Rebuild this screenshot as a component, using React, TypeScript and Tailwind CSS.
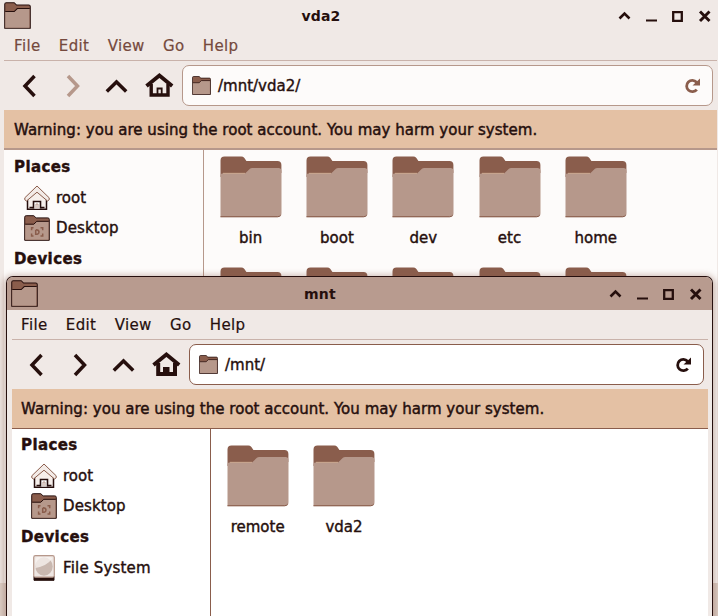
import React from "react";

const DARK = "#260f0d";
const BROWN = "#8a5d4c";
const MID = "#b6988b";

function SmallFolder({ size, desktop = false }: { size: number; desktop?: boolean }) {
  return (
    <svg width={size} height={size} viewBox="0 0 26 26" className="shrink-0">
      <path d="M.7 25.3V2.2Q.7.7 2.2.7h7.6l2.3 2.2h11.7q1.5 0 1.5 1.5v20.9z" fill={BROWN} stroke={DARK} strokeWidth="1" />
      <path d="M1.2 9.4h8.6l3-2.9h11.7v18.3H1.2z" fill={MID} />
      <path d="M1.2 9.2h8.6l3-2.9h12" fill="none" stroke={DARK} strokeWidth="1" />
      {desktop && (
        <g fill="none" stroke={BROWN} strokeWidth="1.5">
          <path d="M9.500 12.800H7.600v2.400M16.500 12.800h2.200v2.400M9.500 21H7.600v-2.400M16.500 21h2.200v-2.400" />
          <path d="M11.700 14.800v4.500h1.500q1.800-.3 1.800-2.300t-3-2.200" />
        </g>
      )}
    </svg>
  );
}

function BigFolder() {
  return (
    <svg width="62" height="62" viewBox="0 0 62 62" className="shrink-0">
      <path d="M.5 21V4.500q0-4 4-4h16.700q2 0 3.200 1.400l2 3h31q4 0 4 4V17z" fill={BROWN} />
      <path d="M.5 61.200V19.600q.2-2.400 2.800-2.400h22l4.600-4.400q1-.8 2.200-.8h26.300q3 0 3.100 3.200v42q0 4-4 4z" fill={MID} />
      <path d="M3 17.300h22" stroke="#e4c1a4" strokeWidth=".6" />
      <path d="M.5 60.700h57q2.200 0 3.200-1.600" fill="none" stroke={BROWN} strokeWidth="1" />
    </svg>
  );
}

function SidebarHome() {
  return (
    <svg width="26" height="26" viewBox="0 0 26 26" className="shrink-0">
      <path d="M3.500 13v11.300h19V13L13 5z" fill="#f6efeb" stroke={DARK} strokeWidth="1.500" />
      <path d="M.8 12.800 13 1 25.200 12.800v2l-1.700 1.200L13 7.200 2.500 16 .8 14.800z" fill="#f3ebe7" stroke={BROWN} strokeWidth="1" />
      <path d="M9.500 23.500v-7h7v7" fill="#fff" stroke={DARK} strokeWidth="1.600" />
      <path d="M5.500 22.500h4M16.500 22.500h4" stroke={DARK} strokeWidth="1.600" />
      <path d="M12 23v-4h2v4" fill="none" stroke={MID} />
    </svg>
  );
}

function Drive() {
  return (
    <svg width="22" height="26" viewBox="0 0 22 26" className="shrink-0">
      <path d="M1 21h20v4.300H1z" fill={DARK} stroke={DARK} />
      <rect x=".7" y=".7" width="20.600" height="21.500" rx="1.800" fill="#eee6e2" stroke={MID} strokeWidth="1.200" />
      <ellipse cx="11" cy="11.500" rx="8.700" ry="9.300" fill="#c9b8b0" />
      <path d="M2.300 13V4q0-2 2-2h13q1.500 0 2 1.500Q14 11 2.300 13z" fill="#f8f4f1" opacity=".75" />
    </svg>
  );
}

function ToolbarIcons({ active }: { active: boolean }) {
  return (
    <svg
      width="178"
      height="48"
      viewBox="0 0 178 48"
      fill="none"
      stroke={DARK}
      strokeWidth="3.500"
      className={`shrink-0 ${active ? "-ml-px" : ""}`}
    >
      <path d="M30.500 14 21 24l9.500 10" />
      <path d="m64 14 9.500 10L64 34" stroke={active ? DARK : MID} />
      <path d="m102.800 29.500 9.700-9.500 9.700 9.500" />
      <path d="m142.500 24 12.900-10.500L168.200 24" strokeWidth="3.800" />
      <path d="M147.200 22v11h16.800V22" strokeWidth={active ? 4 : 3.400} />
      <path
        d={active ? "M152 34v-8h6.500v8z" : "M153.500 33V26.500h4.200V33"}
        fill={active ? DARK : "none"}
        strokeWidth={active ? 0 : 1.800}
      />
    </svg>
  );
}

function Reload({ color }: { color: string }) {
  return (
    <svg width="17" height="16" viewBox="0 0 17 16" fill="none" stroke={color}>
      <path d="M12.600 4.200A5.700 5.700 0 1 0 12.800 11.600" strokeWidth="2.800" />
      <path d="M16 .5v7H8.500z" fill={color} stroke="none" />
    </svg>
  );
}

function WindowButtons() {
  return (
    <svg width="94" height="14" viewBox="0 0 94 14" fill="none" stroke={DARK} strokeWidth="2.600">
      <path d="m1.500 9.500 5-5 5 5" />
      <path d="M28 11.500h11" strokeWidth="2" />
      <path d="M55.200 3.200h8.600v8.600h-8.600z" strokeWidth="2.300" />
      <path d="m82 2.500 9.500 9.500M91.500 2.500 82 12" strokeWidth="2.900" />
    </svg>
  );
}

interface FileWindowProps {
  title: string;
  path: string;
  active: boolean;
  files: string[];
}

function FileWindow({ title, path, active, files }: FileWindowProps) {
  const inset = active ? "pl-[9px]" : "pl-[10px]";
  return (
    <div className={`flex h-full flex-col bg-[#f0e9e6] text-[#260f0d] ${active ? "rounded-t-[7px] border border-b-0 border-[#260f0d] shadow-[0_2px_6px_3px_rgba(138,93,76,0.4)]" : ""}`}>
      <div className={`flex shrink-0 items-center ${active ? "h-[33px] rounded-t-[6px] bg-[#b89b8f] pl-[4px] pr-[9px]" : "h-[31px] pl-[4px] pr-[6px]"}`}>
        <div className="w-[94px]"><SmallFolder size={27} /></div>
        <div className="flex-1 pr-[74px] text-center text-sm font-bold tracking-[0.2px]">{title}</div>
        <WindowButtons />
      </div>
      <div className={`flex min-h-0 flex-1 flex-col ${active ? "ml-[5px] mr-[4px]" : "ml-1 mr-px"}`}>
        <div className={`flex h-[30px] shrink-0 items-center gap-[18.3px] border-b border-[#c9b2aa] tracking-[0.36px] [-webkit-text-stroke:0.2px] ${inset} ${active ? "" : "text-[#75493d]"}`}>
          {["File", "Edit", "View", "Go", "Help"].map((item) => <span key={item}>{item}</span>)}
        </div>
        <div className="flex h-[49px] shrink-0 items-center pr-[4px]">
          <ToolbarIcons active={active} />
          <div className={`flex h-[41px] flex-1 items-center rounded-[7px] border pl-[9px] pr-[11px] ${active ? "border-[#8a5d4c] bg-white" : "border-[#b6988b] bg-[#fdfbfa]"}`}>
            <SmallFolder size={19} />
            <span className="ml-[7px] flex-1 [-webkit-text-stroke:0.4px]">{path}</span>
            <Reload color={active ? DARK : BROWN} />
          </div>
        </div>
        <div className={`flex h-10 shrink-0 items-center bg-[#e4c1a4] ${inset} ${active ? "border-b border-[#8a5d4c]" : "border-b-2 border-[#b6988b] pt-px"}`}>
          <span className="whitespace-nowrap tracking-[0.03px] [-webkit-text-stroke:0.45px]">Warning: you are using the root account. You may harm your system.</span>
        </div>
        <div className={`flex min-h-0 flex-1 ${active ? "bg-white" : "bg-[#fdfbfa]"}`}>
          <div className={`shrink-0 border-r [-webkit-text-stroke:0.4px] ${inset} ${active ? "w-[199px] border-r-[#8a5d4c]" : "w-[200px] border-r-[#b6988b] pt-[1px]"}`}>
            <div className="flex h-[31px] items-center font-bold tracking-[0.4px]">Places</div>
            <div className="flex h-[31px] items-center gap-[6px] pl-[10px]"><SidebarHome />root</div>
            <div className="flex h-[30px] items-center gap-[6px] pl-[10px] tracking-[0.12px]"><SmallFolder size={26} desktop />Desktop</div>
            <div className="flex h-[31px] items-center font-bold tracking-[0.4px]">Devices</div>
            {active && <div className="flex h-[31px] items-center gap-[8px] pl-[12px] tracking-[0.18px]"><Drive />File System</div>}
          </div>
          <div className={`grid flex-1 auto-rows-[111px] grid-cols-[repeat(5,86.3px)] overflow-hidden pl-[3.5px] ${active ? "pt-[16px]" : "pt-[6px]"}`}>
            {files.map((name, i) => (
              <div key={i} className="flex flex-col items-center">
                <BigFolder />
                {name && <span className="mt-[9px] [-webkit-text-stroke:0.4px]">{name}</span>}
              </div>
            ))}
          </div>
        </div>
      </div>
    </div>
  );
}

export default function App() {
  return (
    <div className="relative h-[616px] w-[718px] overflow-hidden bg-[#ded1ca] font-['DejaVu_Sans',sans-serif] text-[15px] leading-[22px]">
      <div className="h-[583px] w-[718px]">
        <FileWindow title="vda2" path="/mnt/vda2/" active={false} files={["bin", "boot", "dev", "etc", "home", "", "", "", "", ""]} />
      </div>
      <div className="absolute left-[6px] top-[276px] h-[340px] w-[707px]">
        <FileWindow title="mnt" path="/mnt/" active files={["remote", "vda2"]} />
      </div>
    </div>
  );
}
